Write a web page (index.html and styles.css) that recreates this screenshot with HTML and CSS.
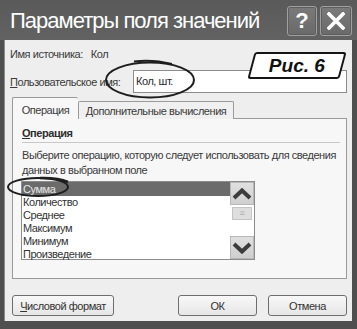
FILE: index.html
```html
<!DOCTYPE html>
<html lang="ru">
<head>
    <meta charset="UTF-8">
    <title>Параметры поля значений</title>
    <link rel="stylesheet" href="styles.css">
</head>
<body>
    <div class="dialog">
        <div class="titlebar">
            <span class="title">Параметры поля значений</span>
            <div class="caption-btns">
                <span class="cap-btn help">?</span>
                <span class="cap-btn close">
                    <svg width="18" height="18" viewBox="0 0 18 18">
                        <path d="M2 2 L16 16 M16 2 L2 16" stroke="#fff" stroke-width="3.6" stroke-linecap="square"/>
                    </svg>
                </span>
            </div>
        </div>

        <div class="content">
            <div class="row source">
                <span>Имя источника:</span>
                <span class="value">Кол</span>
            </div>
            <div class="row custom">
                <label><u>П</u>ользовательское имя:</label>
                <div class="input">Кол, шт.</div>
            </div>

            <div class="tabs">
                <div class="tab active">Операция</div>
                <div class="tab extra">Дополнительные вычисления</div>
            </div>
            <div class="panel">
                <div class="heading"><u>О</u>перация</div>
                <p class="hint">Выберите операцию, которую следует использовать для сведения данных в выбранном поле</p>
                <div class="listbox">
                    <ul class="items">
                        <li class="selected">Сумма</li>
                        <li>Количество</li>
                        <li>Среднее</li>
                        <li>Максимум</li>
                        <li>Минимум</li>
                        <li>Произведение</li>
                    </ul>
                    <div class="scrollbar">
                        <div class="arrow">
                            <svg width="20" height="12" viewBox="0 0 20 12">
                                <path d="M2 10 L10 2.5 L18 10" fill="none" stroke="#3c3c3c" stroke-width="4"/>
                            </svg>
                        </div>
                        <div class="thumb">≡</div>
                        <div class="track"></div>
                        <div class="arrow">
                            <svg width="20" height="12" viewBox="0 0 20 12">
                                <path d="M2 2 L10 9.5 L18 2" fill="none" stroke="#3c3c3c" stroke-width="4"/>
                            </svg>
                        </div>
                    </div>
                </div>
            </div>

            <div class="buttons">
                <button class="btn format"><u>Ч</u>исловой формат</button>
                <button class="btn ok">ОК</button>
                <button class="btn">Отмена</button>
            </div>
        </div>

        <!-- annotations drawn over the dialog -->
        <div class="badge"><span>Рис. 6</span></div>
        <svg class="marks" width="357" height="329" viewBox="0 0 357 329">
            <ellipse cx="150" cy="80" rx="44" ry="17.5" fill="none" stroke="#1e1e1e" stroke-width="2"/>
            <path d="M134 61.5 Q152 59 172 64" fill="none" stroke="#1e1e1e" stroke-width="2"/>
            <ellipse cx="38" cy="187" rx="30" ry="9" fill="none" stroke="#1e1e1e" stroke-width="2"/>
            <path d="M40 178 Q58 177.5 68 182" fill="none" stroke="#1e1e1e" stroke-width="2.5"/>
        </svg>
    </div>
</body>
</html>
```

FILE: styles.css
```css
body {
    margin: 0;
    background: #ffffff;
    font-family: "Liberation Sans", Arial, sans-serif;
}

.dialog {
    position: relative;
    width: 357px;
    height: 329px;
    box-sizing: border-box;
    padding: 0 5px 8px 4px;
    background: #4f4f4f;
    display: flex;
    flex-direction: column;
}

/* title bar */
.titlebar {
    height: 40px;
    display: flex;
    align-items: center;
    justify-content: space-between;
    background: linear-gradient(#5a5a5a, #626262);
    margin: 0 -5px 0 -4px;
    padding: 0 5px 0 10px;
}

.title {
    color: #ffffff;
    font-size: 22px;
    letter-spacing: -1px;
    white-space: nowrap;
    margin-top: 2px;
}

.caption-btns {
    display: flex;
    gap: 3px;
    align-self: flex-start;
    margin-top: 6px;
}

.cap-btn {
    width: 30px;
    height: 30px;
    box-sizing: border-box;
    border: 1px solid #a0a0a0;
    border-radius: 3px;
    background: linear-gradient(#7a7a7a, #6a6a6a);
    box-shadow: inset 0 0 0 1px #5e5e5e;
    display: flex;
    align-items: center;
    justify-content: center;
    color: #ffffff;
}

.cap-btn.help {
    font-size: 22px;
    font-weight: bold;
}

.cap-btn.close {
    width: 32px;
}

/* body of the dialog */
.content {
    flex: 1;
    background: #eeeeee;
    border-left: 1px solid #8a8a8a;
    padding: 7px 5px 5px 5px;
    display: flex;
    flex-direction: column;
    color: #3a3a3a;
    font-size: 11px;
    letter-spacing: -0.45px;
}

.row {
    display: flex;
    align-items: center;
}

.source {
    height: 14px;
}

.source .value {
    margin-left: 8px;
}

.custom {
    margin-top: 9px;
    justify-content: space-between;
}

.input {
    width: 214px;
    height: 23px;
    box-sizing: border-box;
    border: 1px solid #8c8c8c;
    background: #ffffff;
    padding: 4px 2px;
    color: #2a2a2a;
}

/* tabs */
.tabs {
    display: flex;
    align-items: flex-end;
    margin: 4px 0 -1px 2px;
    position: relative;
    z-index: 1;
}

.tab {
    height: 18px;
    box-sizing: border-box;
    padding-top: 3px;
    text-align: center;
    border: 1px solid #9a9a9a;
    border-bottom: none;
    background: #f0f0f0;
    border-radius: 2px 2px 0 0;
    white-space: nowrap;
}

.tab.active {
    width: 66px;
    height: 22px;
    padding-top: 6px;
    background: #f7f7f7;
    border-right: none;
}

.tab.extra {
    width: 156px;
}

.panel {
    height: 161px;
    box-sizing: border-box;
    margin-left: 2px;
    border: 1px solid #9a9a9a;
    background: #f7f7f7;
    padding: 7px 6px 0 9px;
}

.heading {
    font-weight: bold;
    line-height: 14px;
    padding-bottom: 2px;
    border-bottom: 1px solid #c8c8c8;
    color: #2e2e2e;
}

.hint {
    margin: 5px 0 0;
    line-height: 15px;
}

.listbox {
    display: flex;
    width: 234px;
    height: 79px;
    box-sizing: border-box;
    margin: 3px 0 0 -1px;
    border: 1px solid #8c8c8c;
    background: #ffffff;
}

.items {
    flex: 1;
    list-style: none;
    margin: 0;
    padding: 0;
}

.items li {
    height: 13px;
    line-height: 13px;
    padding-left: 1px;
    color: #333333;
}

.items li.selected {
    height: 14px;
    line-height: 14px;
    background: #6b6b6b;
    color: #e8e8e8;
}

.scrollbar {
    width: 24px;
    display: flex;
    flex-direction: column;
}

.arrow {
    height: 23px;
    box-sizing: border-box;
    border: 1px solid #b8b8b8;
    background: linear-gradient(#e0e0e0, #cfcfcf);
    display: flex;
    align-items: center;
    justify-content: center;
}

.thumb {
    height: 13px;
    margin: 2px 2px 0;
    box-sizing: border-box;
    border: 1px solid #c4c4c4;
    background: #dedede;
    color: #b0b0b0;
    font-size: 9px;
    line-height: 11px;
    text-align: center;
}

.track {
    flex: 1;
    background: #ffffff;
}

/* bottom buttons */
.buttons {
    margin-top: auto;
    display: flex;
    align-items: center;
    padding-left: 2px;
}

.btn {
    height: 21px;
    width: 79px;
    box-sizing: border-box;
    border: 1px solid #6e6e6e;
    border-radius: 3px;
    background: linear-gradient(#f8f8f8, #e6e6e6);
    font-family: inherit;
    font-size: 11px;
    letter-spacing: -0.45px;
    color: #333333;
    padding: 0;
}

.btn.format {
    width: 102px;
}

.btn.ok {
    margin-left: auto;
    margin-right: 11px;
}

/* figure label and hand-drawn marks */
.badge {
    position: absolute;
    left: 251px;
    top: 52px;
    width: 92px;
    height: 27px;
    box-sizing: border-box;
    border: 2px solid #151515;
    border-radius: 3px;
    background: #ffffff;
    transform: skewX(-15deg);
    display: flex;
    align-items: center;
    justify-content: center;
}

.badge span {
    transform: skewX(15deg);
    font-size: 19px;
    font-weight: bold;
    font-style: italic;
    color: #111111;
}

.marks {
    position: absolute;
    left: 0;
    top: 0;
    pointer-events: none;
}
```
